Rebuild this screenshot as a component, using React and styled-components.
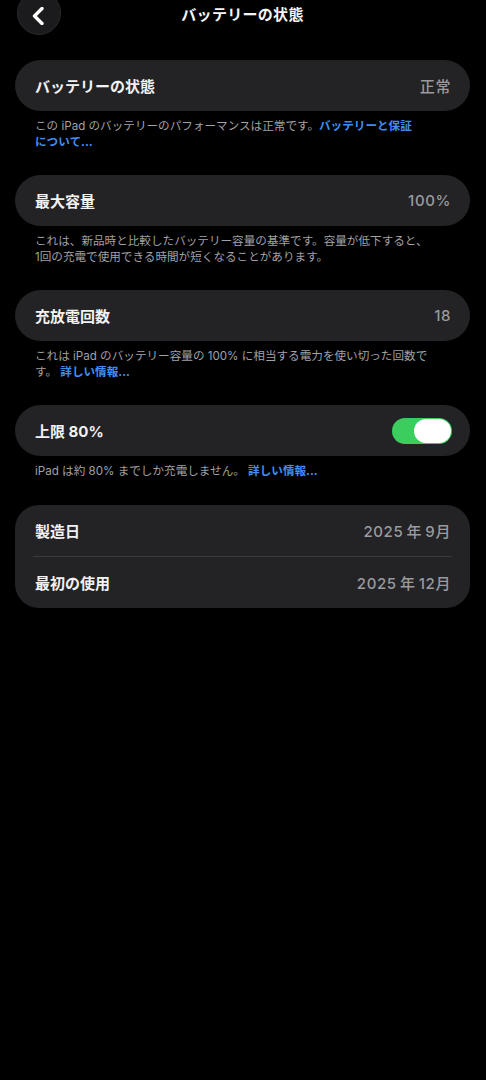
import styled, { createGlobalStyle } from "styled-components"

const GlobalStyle = createGlobalStyle`
  html, body {
    margin: 0;
    padding: 0;
    background: #000000;
  }
  body {
    font-family: "Inter", "Noto Sans CJK JP", sans-serif;
    -webkit-font-smoothing: antialiased;
  }
`

export default function App() {
  return (
    <Page>
      <GlobalStyle />
      <Header>
        <BackButton aria-label="戻る">
          <svg width="14" height="18" viewBox="0 0 14 18">
            <path d="M11 1.5 L3.5 9 L11 16.5" fill="none" stroke="#ffffff" strokeWidth="3.4" strokeLinecap="round" strokeLinejoin="round" />
          </svg>
        </BackButton>
        <Title>バッテリーの状態</Title>
        <span />
      </Header>

      <Card>
        <Row>
          <Label>バッテリーの状態</Label>
          <Value>正常</Value>
        </Row>
      </Card>
      <Footnote>
        この iPad のバッテリーのパフォーマンスは正常です。<Link>バッテリーと保証<br />について...</Link>
      </Footnote>

      <Card>
        <Row>
          <Label>最大容量</Label>
          <Value>100%</Value>
        </Row>
      </Card>
      <Footnote>
        これは、新品時と比較したバッテリー容量の基準です。容量が低下すると、<br />
        1回の充電で使用できる時間が短くなることがあります。
      </Footnote>

      <Card>
        <Row>
          <Label>充放電回数</Label>
          <Value>18</Value>
        </Row>
      </Card>
      <Footnote>
        これは iPad のバッテリー容量の 100% に相当する電力を使い切った回数で<br />
        す。 <Link>詳しい情報...</Link>
      </Footnote>

      <Card>
        <Row>
          <Label>上限 80%</Label>
          <Toggle $on>
            <Knob />
          </Toggle>
        </Row>
      </Card>
      <Footnote>
        iPad は約 80% までしか充電しません。 <Link>詳しい情報...</Link>
      </Footnote>

      <Card $grouped>
        <Row>
          <Label>製造日</Label>
          <Value>2025{"\u2009"}年{"\u2009"}9月</Value>
        </Row>
        <Divider />
        <Row>
          <Label>最初の使用</Label>
          <Value>2025{"\u2009"}年{"\u2009"}12月</Value>
        </Row>
      </Card>
    </Page>
  )
}

const Page = styled.div`
  width: 486px;
  min-height: 1080px;
  box-sizing: border-box;
  padding: 0 16px 0 15px;
  background: #000000;
  overflow: hidden;
`

const Header = styled.div`
  display: grid;
  grid-template-columns: 46px 1fr 46px;
  grid-template-rows: 26px;
  align-items: center;
  height: 26px;
  margin-bottom: 34px;
`

const BackButton = styled.button`
  width: 44px;
  height: 44px;
  margin-left: 2px;
  border-radius: 50%;
  border: 1px solid #2a2a2c;
  background: #1b1b1d;
  display: flex;
  align-items: center;
  justify-content: center;
  padding: 6px 2px 0 0;
  box-sizing: border-box;
`

const Title = styled.h1`
  margin: 0;
  text-align: center;
  font-size: 15px;
  font-weight: 700;
  color: #f5f5f7;
  letter-spacing: 0.3px;
`

const Card = styled.div`
  background: #232325;
  border-radius: ${p => (p.$grouped ? "24px" : "26px")};
  display: flex;
  flex-direction: column;
`

const Row = styled.div`
  display: flex;
  align-items: center;
  justify-content: space-between;
  height: 51px;
  padding: 0 19px 0 20px;
`

const Label = styled.span`
  font-size: 15px;
  font-weight: 700;
  color: #f2f2f4;
`

const Value = styled.span`
  font-size: 15px;
  font-weight: 500;
  letter-spacing: 0.6px;
  color: #9a9a9f;
`

const Divider = styled.div`
  height: 1px;
  background: #3a3a3d;
  margin: 0 18px;
`

const Footnote = styled.p`
  margin: 8px 0 25px;
  padding: 0 20px;
  font-size: 11.6px;
  line-height: 15.5px;
  color: #a1a1a6;
  white-space: nowrap;
`

const Link = styled.span`
  color: #3f8ef3;
  font-weight: 700;
`

const Toggle = styled.div`
  width: 60px;
  height: 26px;
  border-radius: 13px;
  background: ${p => (p.$on ? "#3bcd5d" : "#39393d")};
  display: flex;
  align-items: center;
  justify-content: ${p => (p.$on ? "flex-end" : "flex-start")};
  padding: 0 1px;
  box-sizing: border-box;
  margin-right: -1px;
`

const Knob = styled.div`
  width: 37px;
  height: 24px;
  border-radius: 12px;
  background: #ffffff;
`
